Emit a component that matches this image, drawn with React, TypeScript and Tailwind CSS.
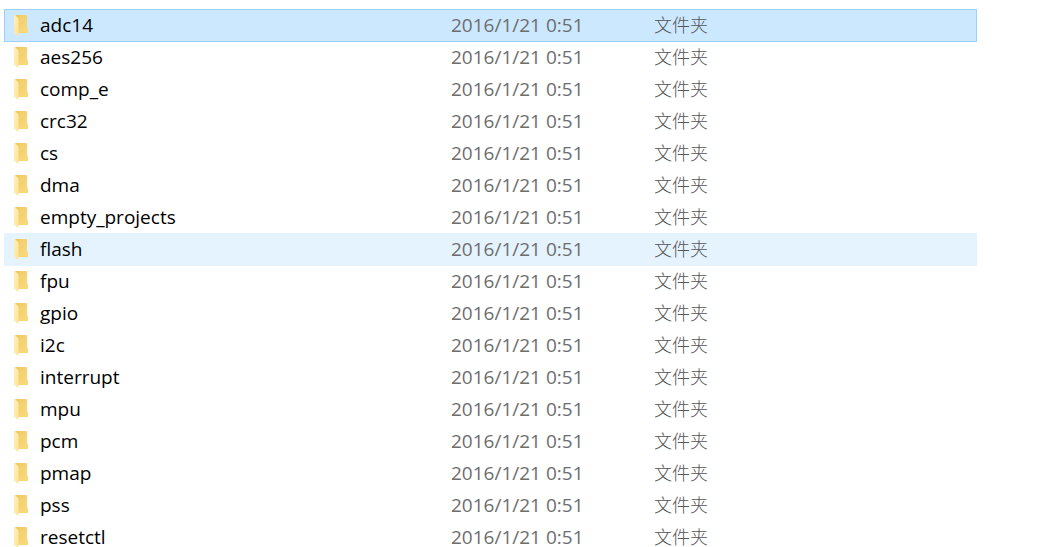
type Folder = {
  name: string
  modified: string
  kind: string
}

const names = [
  'adc14',
  'aes256',
  'comp_e',
  'crc32',
  'cs',
  'dma',
  'empty_projects',
  'flash',
  'fpu',
  'gpio',
  'i2c',
  'interrupt',
  'mpu',
  'pcm',
  'pmap',
  'pss',
  'resetctl',
]

const folders: Folder[] = names.map((name) => ({
  name,
  modified: '2016/1/21 0:51',
  kind: '文件夹',
}))

const SELECTED = 'adc14'
const HOVERED = 'flash'

function FolderIcon() {
  return (
    <svg width="16" height="22" viewBox="0 0 16 22" className="block" aria-hidden="true">
      <defs>
        <linearGradient id="folder-back" x1="0" y1="0" x2="1" y2="1">
          <stop offset="0" stopColor="#e9c25f" />
          <stop offset="0.35" stopColor="#f3d070" />
          <stop offset="1" stopColor="#fadb7c" />
        </linearGradient>
        <linearGradient id="folder-flap" x1="0" y1="0" x2="1" y2="1">
          <stop offset="0" stopColor="#fff0ba" />
          <stop offset="1" stopColor="#ffe398" />
        </linearGradient>
      </defs>
      <path d="M2 1h12v12l1 1v5H5z" fill="url(#folder-back)" />
      <path d="M1 1h1l3.500 3.500V21.500H4.500L1 18.500z" fill="url(#folder-flap)" />
    </svg>
  )
}

// selected and hovered rows reach one pixel into the row below
function rowStyle(name: string) {
  if (name === SELECTED) {
    return 'bg-[#cce8ff] shadow-[inset_1px_1px_0_#99d1ff,inset_-1px_0_0_#99d1ff,0_1px_0_#99d1ff]'
  }
  if (name === HOVERED) return 'bg-[#e5f3ff] shadow-[0_1px_0_#e5f3ff]'
  return ''
}

export default function App() {
  return (
    <main className="min-h-screen bg-white pt-[9px] pl-1 pr-[76px] font-['Open_Sans','Noto_Sans_CJK_SC',sans-serif] text-[19px]">
      <table className="w-full table-fixed border-separate border-spacing-0">
        <colgroup>
          <col className="w-9" />
          <col className="w-[411px]" />
          <col className="w-[203px]" />
          <col />
        </colgroup>
        <tbody>
          {folders.map((folder) => (
            <tr key={folder.name} className={`h-8 ${rowStyle(folder.name)}`}>
              <td className="p-0 pl-[9px]">
                <FolderIcon />
              </td>
              <td className="p-0 leading-8 text-black">{folder.name}</td>
              <td className="p-0 leading-8 text-[#6d6d6d]">{folder.modified}</td>
              <td className="p-0 text-lg leading-8 font-light text-[#555555]">{folder.kind}</td>
            </tr>
          ))}
        </tbody>
      </table>
    </main>
  )
}
